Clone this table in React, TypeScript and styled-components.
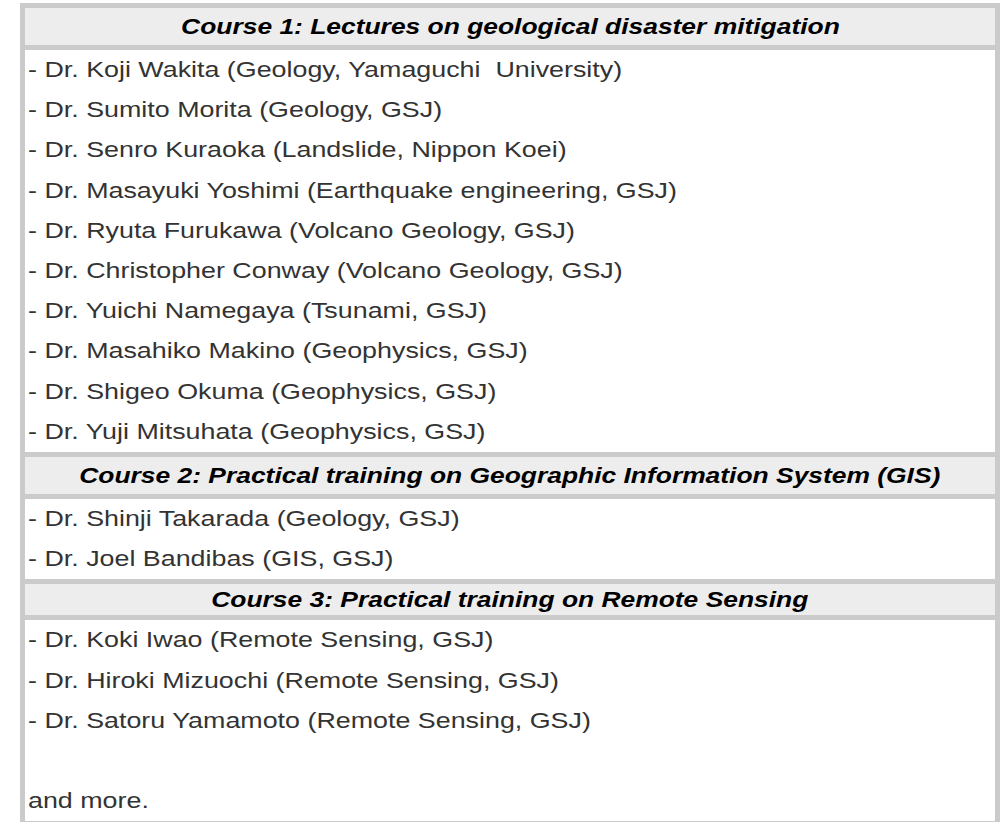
import React from 'react';
import styled, {createGlobalStyle} from "styled-components";

const GlobalStyle = createGlobalStyle`
html, body {
  margin: 0;
  padding: 0;
  background: #ffffff;
}
body {
  font-family: "Liberation Sans", Arial, sans-serif;
}
`

const Page = styled.div`
padding: 3px 0 0 20px;
`

const Table = styled.div`
width: 980px;
box-sizing: border-box;
background: #cbcbcb;
padding: 5px;
display: flex;
flex-direction: column;
gap: 5px;
`

const CourseHeader = styled.div<{ $h: number }>`
background: #ededed;
height: ${p => p.$h}px;
display: flex;
align-items: center;
justify-content: center;
`

const CourseTitle = styled.span`
display: inline-block;
font-weight: bold;
font-style: italic;
font-size: 22px;
color: #000;
white-space: nowrap;
transform: scaleX(1.2);
`

const Lecturers = styled.div`
background: #ffffff;
padding: 0 0 0 3px;
font-size: 22px;
line-height: 40.2px;
color: #333;
overflow: hidden;
`

const Line = styled.div`
width: max-content;
white-space: pre;
min-height: 40.2px;
transform: scaleX(1.22);
transform-origin: left center;
`

const courses = [
    {
        title: 'Course 1: Lectures on geological disaster mitigation',
        h: 37,
        people: [
            '- Dr. Koji Wakita (Geology, Yamaguchi  University)',
            '- Dr. Sumito Morita (Geology, GSJ)',
            '- Dr. Senro Kuraoka (Landslide, Nippon Koei)',
            '- Dr. Masayuki Yoshimi (Earthquake engineering, GSJ)',
            '- Dr. Ryuta Furukawa (Volcano Geology, GSJ)',
            '- Dr. Christopher Conway (Volcano Geology, GSJ)',
            '- Dr. Yuichi Namegaya (Tsunami, GSJ)',
            '- Dr. Masahiko Makino (Geophysics, GSJ)',
            '- Dr. Shigeo Okuma (Geophysics, GSJ)',
            '- Dr. Yuji Mitsuhata (Geophysics, GSJ)',
        ],
    },
    {
        title: 'Course 2: Practical training on Geographic Information System (GIS)',
        h: 37,
        people: [
            '- Dr. Shinji Takarada (Geology, GSJ)',
            '- Dr. Joel Bandibas (GIS, GSJ)',
        ],
    },
    {
        title: 'Course 3: Practical training on Remote Sensing',
        h: 31,
        people: [
            '- Dr. Koki Iwao (Remote Sensing, GSJ)',
            '- Dr. Hiroki Mizuochi (Remote Sensing, GSJ)',
            '- Dr. Satoru Yamamoto (Remote Sensing, GSJ)',
            '',
            'and more.',
        ],
    },
]

const App = () => {
    return (
        <Page>
            <GlobalStyle/>
            <Table>
                {courses.map(course => (
                    <React.Fragment key={course.title}>
                        <CourseHeader $h={course.h}>
                            <CourseTitle>{course.title}</CourseTitle>
                        </CourseHeader>
                        <Lecturers>
                            {course.people.map((p, i) => <Line key={i}>{p}</Line>)}
                        </Lecturers>
                    </React.Fragment>
                ))}
            </Table>
        </Page>
    )
}

export default App
